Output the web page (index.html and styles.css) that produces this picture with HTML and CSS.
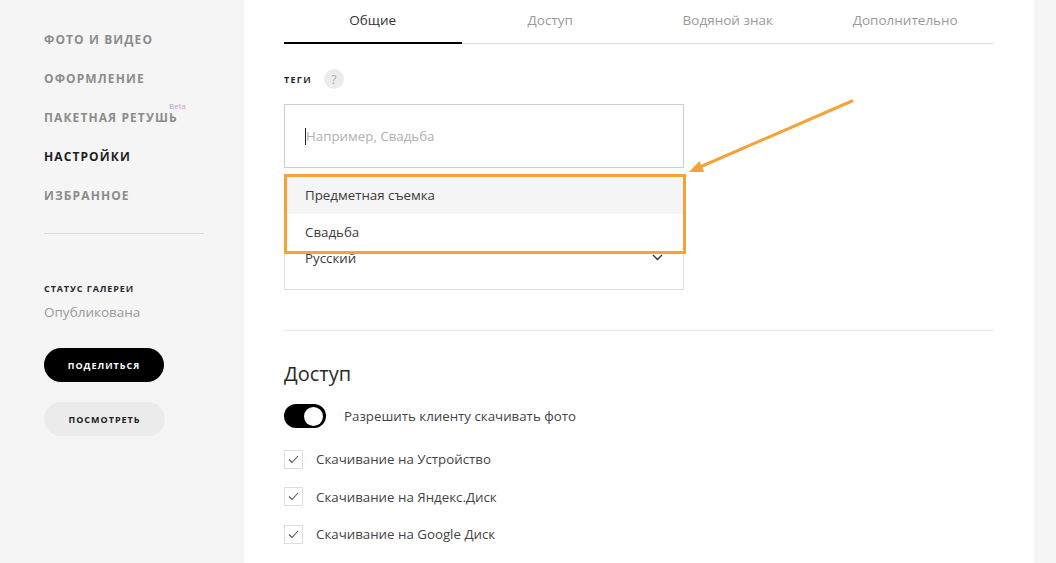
FILE: index.html
```html
<!DOCTYPE html>
<html lang="ru">
<head>
    <meta charset="UTF-8">
    <meta name="viewport" content="width=device-width, initial-scale=1.0">
    <title>Настройки галереи</title>
    <link rel="stylesheet" href="styles.css">
</head>
<body>
    <aside class="sidebar">
        <nav class="side-nav">
            <a class="nav-item" href="#">Фото и видео</a>
            <a class="nav-item" href="#">Оформление</a>
            <a class="nav-item" href="#">Пакетная ретушь<span class="beta">Beta</span></a>
            <a class="nav-item active" href="#">Настройки</a>
            <a class="nav-item" href="#">Избранное</a>
        </nav>
        <div class="side-divider"></div>
        <div class="status-title">Статус галереи</div>
        <div class="status-value">Опубликована</div>
        <button class="btn btn-dark">Поделиться</button>
        <button class="btn btn-light">Посмотреть</button>
    </aside>

    <main class="main">
        <div class="tabs">
            <div class="tab active">Общие</div>
            <div class="tab">Доступ</div>
            <div class="tab">Водяной знак</div>
            <div class="tab">Дополнительно</div>
        </div>

        <div class="field-label">
            <span>Теги</span>
            <span class="help">?</span>
        </div>
        <div class="field">
            <div class="text-input"><span class="caret"></span><span class="placeholder">Например, Свадьба</span></div>
            <div class="suggest">
                <div class="suggest-item hover">Предметная съемка</div>
                <div class="suggest-item">Свадьба</div>
            </div>
        </div>

        <div class="select">
            <span>Русский</span>
            <svg class="chevron" width="11" height="7" viewBox="0 0 11 7"><path d="M1 1l4.5 4.5L10 1" fill="none" stroke="#333" stroke-width="1.4"/></svg>
        </div>

        <div class="divider"></div>

        <h2 class="section-title">Доступ</h2>
        <div class="toggle-row">
            <span class="toggle"><span class="knob"></span></span>
            <span>Разрешить клиенту скачивать фото</span>
        </div>
        <div class="check-row">
            <span class="checkbox"><svg width="11" height="9" viewBox="0 0 11 9"><path d="M1 4.5l3 3L10 1" fill="none" stroke="#555" stroke-width="1.1"/></svg></span>
            <span>Скачивание на Устройство</span>
        </div>
        <div class="check-row">
            <span class="checkbox"><svg width="11" height="9" viewBox="0 0 11 9"><path d="M1 4.5l3 3L10 1" fill="none" stroke="#555" stroke-width="1.1"/></svg></span>
            <span>Скачивание на Яндекс.Диск</span>
        </div>
        <div class="check-row">
            <span class="checkbox"><svg width="11" height="9" viewBox="0 0 11 9"><path d="M1 4.5l3 3L10 1" fill="none" stroke="#555" stroke-width="1.1"/></svg></span>
            <span>Скачивание на Google Диск</span>
        </div>

        <svg class="pointer" width="180" height="90" viewBox="0 0 180 90">
            <line x1="172" y1="11" x2="20" y2="77" stroke="#f4a338" stroke-width="3" stroke-linecap="round"/>
            <polygon points="9,82 24.2,81.9 19.4,70.9" fill="#f4a338"/>
        </svg>
    </main>
</body>
</html>
```

FILE: styles.css
```css
body {
    margin: 0;
    height: 563px;
    overflow: hidden;
    display: flex;
    background-color: #f5f5f5;
    font-family: "Open Sans", "Liberation Sans", sans-serif;
    color: #333;
}
.sidebar {
    width: 244px;
    flex-shrink: 0;
    box-sizing: border-box;
    padding: 29px 0 0 44px;
}
.side-nav {
    display: flex;
    flex-direction: column;
}
.nav-item {
    position: relative;
    display: block;
    width: max-content;
    height: 22px;
    line-height: 22px;
    margin-bottom: 17px;
    font-size: 12px;
    font-weight: 700;
    letter-spacing: 1.1px;
    text-transform: uppercase;
    text-decoration: none;
    color: #8c8c8c;
}
.nav-item.active {
    color: #1e1e1e;
}
.beta {
    position: absolute;
    left: 125px;
    top: -12px;
    font-size: 8px;
    font-weight: 400;
    letter-spacing: 0;
    text-transform: none;
    background: linear-gradient(90deg, #9a8ef0, #e58bc9);
    -webkit-background-clip: text;
    background-clip: text;
    color: transparent;
}
.side-divider {
    width: 160px;
    height: 1px;
    background-color: #ddd;
    margin-top: 9px;
}
.status-title {
    margin-top: 48px;
    font-size: 9px;
    font-weight: 700;
    letter-spacing: 0.9px;
    text-transform: uppercase;
    color: #2a2a2a;
    line-height: 14px;
}
.status-value {
    margin-top: 6px;
    font-size: 13.5px;
    color: #9a9a9a;
    line-height: 20px;
}
.btn {
    display: block;
    width: 120px;
    height: 34px;
    border: none;
    border-radius: 17px;
    font-family: inherit;
    font-size: 9px;
    font-weight: 700;
    letter-spacing: 1px;
    text-transform: uppercase;
    cursor: pointer;
}
.btn-dark {
    margin-top: 26px;
    background-color: #000;
    color: #fff;
}
.btn-light {
    margin-top: 20px;
    width: 121px;
    background-color: #ebebeb;
    color: #222;
}

.main {
    position: relative;
    width: 790px;
    flex-shrink: 0;
    box-sizing: border-box;
    padding: 0 40px;
    background-color: #fff;
}
.tabs {
    display: flex;
    border-bottom: 1px solid #e0e0e0;
}
.tab {
    flex: 1;
    text-align: center;
    padding: 10px 0 12px;
    line-height: 20px;
    font-size: 13.5px;
    color: #9a9a9a;
    border-bottom: 2px solid transparent;
    margin-bottom: -1px;
}
.tab.active {
    color: #333;
    border-bottom-color: #000;
}
.field-label {
    display: flex;
    align-items: center;
    gap: 12px;
    margin-top: 25px;
    height: 20px;
    font-size: 9px;
    font-weight: 700;
    letter-spacing: 1.3px;
    text-transform: uppercase;
    color: #1e1e2a;
}
.help {
    width: 20px;
    height: 20px;
    border-radius: 50%;
    background-color: #ececec;
    color: #aaa;
    font-size: 12px;
    font-weight: 400;
    letter-spacing: 0;
    display: flex;
    align-items: center;
    justify-content: center;
}
.field {
    position: relative;
    margin-top: 15px;
}
.text-input {
    width: 400px;
    height: 64px;
    box-sizing: border-box;
    border: 1px solid #ccc;
    display: flex;
    align-items: center;
    padding-left: 20px;
    font-size: 13.3px;
    color: #b0b0b0;
}
.caret {
    width: 1px;
    height: 17px;
    background-color: #222;
}
.suggest {
    position: absolute;
    left: 0;
    top: 70px;
    width: 402px;
    box-sizing: border-box;
    border: 3px solid #f4a338;
    background-color: #fff;
    z-index: 2;
}
.suggest-item {
    height: 37px;
    line-height: 37px;
    padding-left: 18px;
    font-size: 13.3px;
    color: #3a3a3a;
}
.suggest-item.hover {
    background-color: #f5f5f5;
}
.select {
    margin-top: 57px;
    width: 400px;
    height: 65px;
    box-sizing: border-box;
    border: 1px solid #ddd;
    display: flex;
    align-items: center;
    justify-content: space-between;
    padding: 0 20px;
    font-size: 13.3px;
    color: #3a3a3a;
}
.divider {
    height: 1px;
    background-color: #e8e8e8;
    margin-top: 40px;
}
.section-title {
    margin: 29px 0 0;
    font-size: 20px;
    font-weight: 400;
    line-height: 28px;
    color: #2a2a2a;
}
.toggle-row {
    display: flex;
    align-items: center;
    gap: 18px;
    margin-top: 16px;
    font-size: 13.3px;
    color: #444;
}
.toggle {
    position: relative;
    width: 42px;
    height: 24px;
    border-radius: 12px;
    background-color: #000;
}
.knob {
    position: absolute;
    right: 3px;
    top: 2.5px;
    width: 19px;
    height: 19px;
    border-radius: 50%;
    background-color: #fff;
}
.check-row {
    display: flex;
    align-items: center;
    gap: 13px;
    margin-top: 17.5px;
    height: 20px;
    font-size: 13.3px;
    color: #444;
}
.toggle-row + .check-row {
    margin-top: 21px;
}
.checkbox {
    width: 19px;
    height: 19px;
    box-sizing: border-box;
    border: 1px solid #ddd;
    display: flex;
    align-items: center;
    justify-content: center;
}
.pointer {
    position: absolute;
    left: 436px;
    top: 90px;
}
```
